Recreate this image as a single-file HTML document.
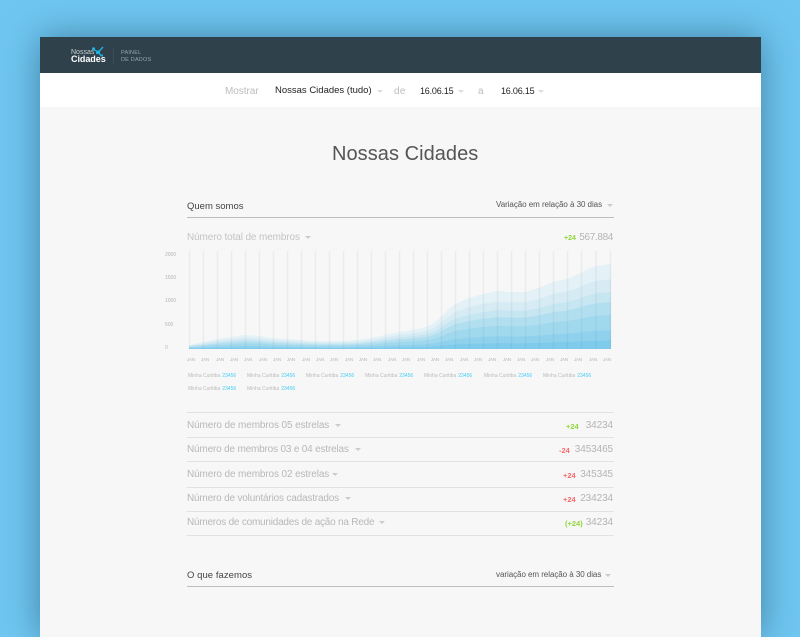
<!DOCTYPE html>
<html><head><meta charset="utf-8"><style>
html,body{margin:0;padding:0}
body{width:800px;height:600px;overflow:hidden;background:#6fc7f1;position:relative;font-family:"Liberation Sans",sans-serif}
#card{position:absolute;left:40px;top:37px;width:721px;height:600px;background:#f7f7f7;box-shadow:0 0 34px rgba(20,60,90,.5)}
#hd{position:absolute;left:40px;top:37px;width:721px;height:36px;background:#2f424b}
#bar{position:absolute;left:40px;top:73px;width:721px;height:34px;background:#fff}
.t{position:absolute;white-space:nowrap;line-height:12px}
.l{position:absolute;height:1px;background:#e2e2e2;left:187px;width:427px}
.tri{position:absolute;width:0;height:0;border-left:3px solid transparent;border-right:3px solid transparent;border-top:3px solid #ccc}
.lb{font-size:10px;color:#b8b8b8;left:187px;letter-spacing:-.12px}
.n{font-size:10px;color:#b4b4b4;letter-spacing:-.1px;right:187px}
.d{font-size:7.5px;font-weight:bold}
.g{color:#90d63a}.rd{color:#f56a6a}
.ax{font-size:5px;color:#b5b5b5;left:165px}
.x{font-size:4.5px;color:#b5b5b5;letter-spacing:-.2px;top:354px}
.lg{font-size:5px;color:#bbb;top:370px}
.lg b{font-weight:normal;color:#45cdf5;margin-left:2px}
</style></head><body>
<div id="card"></div><div id="hd"></div><div id="bar"></div>

<!-- logo -->
<div class="t" style="left:71px;top:47px;font-size:7px;color:#c8d0d4">Nossas</div>
<div class="t" style="left:71px;top:53px;font-size:9px;font-weight:bold;color:#fff;letter-spacing:-.05px">Cidades</div>
<svg style="position:absolute;left:91px;top:46px" width="14" height="12" viewBox="0 0 14 12"><path d="M2 2.5L7 6.5M12 1L7 6.5M7 6.5L10.5 10" stroke="#1fb0e0" stroke-width="1.4" fill="none"/><rect x="1" y="1.5" width="3" height="2.5" fill="#1fb0e0"/><rect x="5" y="4.5" width="4" height="3.5" fill="#1fb0e0"/><rect x="9.5" y="8.5" width="2.5" height="2" fill="#1fb0e0"/></svg>
<div style="position:absolute;left:113px;top:48px;width:1px;height:16px;background:#3a4e57"></div>
<div class="t" style="left:121px;top:47px;font-size:5.5px;color:#98a5ab;letter-spacing:.2px">PAINEL</div>
<div class="t" style="left:121px;top:54px;font-size:5.5px;color:#98a5ab;letter-spacing:.2px">DE DADOS</div>

<!-- filter bar -->
<div class="t" style="left:225px;top:86px;font-size:10px;color:#bcbcbc;letter-spacing:-.05px">Mostrar</div>
<div class="t" style="left:275px;top:85px;font-size:9.5px;color:#222">Nossas Cidades (tudo)</div>
<div class="tri" style="left:377px;top:90px;border-top-color:#ddd"></div>
<div class="t" style="left:394px;top:86px;font-size:10px;color:#bcbcbc;letter-spacing:.3px">de</div>
<div class="t" style="left:420px;top:85px;font-size:9px;color:#222;letter-spacing:-.2px">16.06.15</div>
<div class="tri" style="left:458px;top:90px;border-top-color:#ddd"></div>
<div class="t" style="left:478px;top:86px;font-size:10px;color:#bcbcbc">a</div>
<div class="t" style="left:501px;top:85px;font-size:9px;color:#222;letter-spacing:-.2px">16.06.15</div>
<div class="tri" style="left:538px;top:90px;border-top-color:#ddd"></div>

<div class="t" style="left:332px;top:142px;font-size:20px;line-height:24px;color:#555;letter-spacing:.05px">Nossas Cidades</div>

<!-- section 1 -->
<div class="t" style="left:187px;top:201px;font-size:9.5px;color:#444">Quem somos</div>
<div class="t" style="left:496px;top:199px;font-size:8px;color:#555;letter-spacing:-.05px">Variação em relação à 30 dias</div>
<div class="tri" style="left:607px;top:204px;border-top-color:#ccc"></div>
<div class="l" style="top:217px;background:#bdbdbd"></div>
<div class="t lb" style="top:232px;color:#c4c4c4">Número total de membros</div>
<div class="tri" style="left:305px;top:236px"></div>
<div class="t d g" style="left:564px;top:233px;font-size:7px">+24</div>
<div class="t n" style="top:232px;letter-spacing:-.35px">567.884</div>

<!-- chart -->
<svg style="position:absolute;left:0;top:0" width="800" height="600" viewBox="0 0 800 600">
<defs><path id="a" d="M189 0V-4L203-7L217-10L231-12L245-14L259-13L273-11L287-10L301-9L315-8L329-8L343-8L357-9L371-11L385-14L399-17L413-19L427-22L434-26L441-32L448-39L455-45L469-51L483-55L497-58L511-57L525-57L532-59L539-61L553-67L567-70L581-76L588-80L596-83L611-85V0Z"/></defs>
<g transform="translate(0,349)">
<use href="#a" fill="#e4f1f6"/>
<use href="#a" fill="#d6ebf4" transform="scale(1,.82)"/>
<use href="#a" fill="#c6e6f2" transform="scale(1,.67)"/>
<use href="#a" fill="#b2dff0" transform="scale(1,.55)"/>
<use href="#a" fill="#a0d8ee" transform="scale(1,.4)"/>
<use href="#a" fill="#90d2ed" transform="scale(1,.22)"/>
<use href="#a" fill="#7fcbec" transform="scale(1,.1)"/>
</g>
<path stroke="rgba(90,100,110,.07)" stroke-width="1.5" fill="none" d="M189.5 251V349M203.5 251V349M217.5 251V349M231.5 251V349M245.5 251V349M259.5 251V349M273.5 251V349M287.5 251V349M301.5 251V349M315.5 251V349M329.5 251V349M343.5 251V349M357.5 251V349M371.5 251V349M385.5 251V349M399.5 251V349M413.5 251V349M427.5 251V349M441.5 251V349M455.5 251V349M469.5 251V349M483.5 251V349M497.5 251V349M511.5 251V349M525.5 251V349M539.5 251V349M553.5 251V349M567.5 251V349M581.5 251V349M596 251V349M610.5 251V349"/>
</svg>
<div class="t ax" style="top:249px">2000</div>
<div class="t ax" style="top:272px">1500</div>
<div class="t ax" style="top:295px">1000</div>
<div class="t ax" style="top:319px">500</div>
<div class="t ax" style="top:342px">0</div>

<div class="t x" style="left:187px">JAN</div><div class="t x" style="left:201px">JAN</div><div class="t x" style="left:216px">JAN</div><div class="t x" style="left:230px">JAN</div><div class="t x" style="left:244px">JAN</div><div class="t x" style="left:259px">JAN</div><div class="t x" style="left:273px">JAN</div><div class="t x" style="left:287px">JAN</div><div class="t x" style="left:302px">JAN</div><div class="t x" style="left:316px">JAN</div><div class="t x" style="left:330px">JAN</div><div class="t x" style="left:345px">JAN</div><div class="t x" style="left:359px">JAN</div><div class="t x" style="left:373px">JAN</div><div class="t x" style="left:388px">JAN</div><div class="t x" style="left:402px">JAN</div><div class="t x" style="left:417px">JAN</div><div class="t x" style="left:431px">JAN</div><div class="t x" style="left:445px">JAN</div><div class="t x" style="left:460px">JAN</div><div class="t x" style="left:474px">JAN</div><div class="t x" style="left:488px">JAN</div><div class="t x" style="left:503px">JAN</div><div class="t x" style="left:517px">JAN</div><div class="t x" style="left:531px">JAN</div><div class="t x" style="left:546px">JAN</div><div class="t x" style="left:560px">JAN</div><div class="t x" style="left:574px">JAN</div><div class="t x" style="left:589px">JAN</div><div class="t x" style="left:603px">JAN</div>

<div class="t lg" style="left:188px">Minha Curitiba<b>23456</b></div>
<div class="t lg" style="left:247px">Minha Curitiba<b>23456</b></div>
<div class="t lg" style="left:306px">Minha Curitiba<b>23456</b></div>
<div class="t lg" style="left:365px">Minha Curitiba<b>23456</b></div>
<div class="t lg" style="left:424px">Minha Curitiba<b>23456</b></div>
<div class="t lg" style="left:484px">Minha Curitiba<b>23456</b></div>
<div class="t lg" style="left:543px">Minha Curitiba<b>23456</b></div>
<div class="t lg" style="left:188px;top:383px">Minha Curitiba<b>23456</b></div>
<div class="t lg" style="left:247px;top:383px">Minha Curitiba<b>23456</b></div>

<!-- rows -->
<div class="l" style="top:412px"></div>
<div class="t lb" style="top:420px">Número de membros 05 estrelas</div><div class="tri" style="left:335px;top:424px"></div>
<div class="t d g" style="left:566px;top:421px">+24</div><div class="t n" style="top:420px">34234</div>
<div class="l" style="top:437px"></div>
<div class="t lb" style="top:444px;letter-spacing:-.18px">Número de membros 03 e 04 estrelas</div><div class="tri" style="left:355px;top:448px"></div>
<div class="t d rd" style="left:559px;top:445px">-24</div><div class="t n" style="top:444px">3453465</div>
<div class="l" style="top:461px"></div>
<div class="t lb" style="top:469px">Número de membros 02 estrelas</div><div class="tri" style="left:332px;top:473px"></div>
<div class="t d rd" style="left:563px;top:470px">+24</div><div class="t n" style="top:469px">345345</div>
<div class="l" style="top:487px"></div>
<div class="t lb" style="top:493px;letter-spacing:-.18px">Número de voluntários cadastrados</div><div class="tri" style="left:345px;top:497px"></div>
<div class="t d rd" style="left:563px;top:494px">+24</div><div class="t n" style="top:493px">234234</div>
<div class="l" style="top:511px"></div>
<div class="t lb" style="top:517px;letter-spacing:-.22px">Números de comunidades de ação na Rede</div><div class="tri" style="left:379px;top:521px"></div>
<div class="t d g" style="left:565px;top:518px">(+24)</div><div class="t n" style="top:517px">34234</div>
<div class="l" style="top:535px"></div>

<!-- section 2 -->
<div class="t" style="left:187px;top:570px;font-size:9.5px;color:#444;letter-spacing:.05px">O que fazemos</div>
<div class="t" style="left:496px;top:569px;font-size:8px;color:#555;letter-spacing:-.05px">variação em relação à 30 dias</div>
<div class="tri" style="left:605px;top:574px;border-top-color:#ccc"></div>
<div class="l" style="top:586px;background:#bdbdbd"></div>
</body></html>
